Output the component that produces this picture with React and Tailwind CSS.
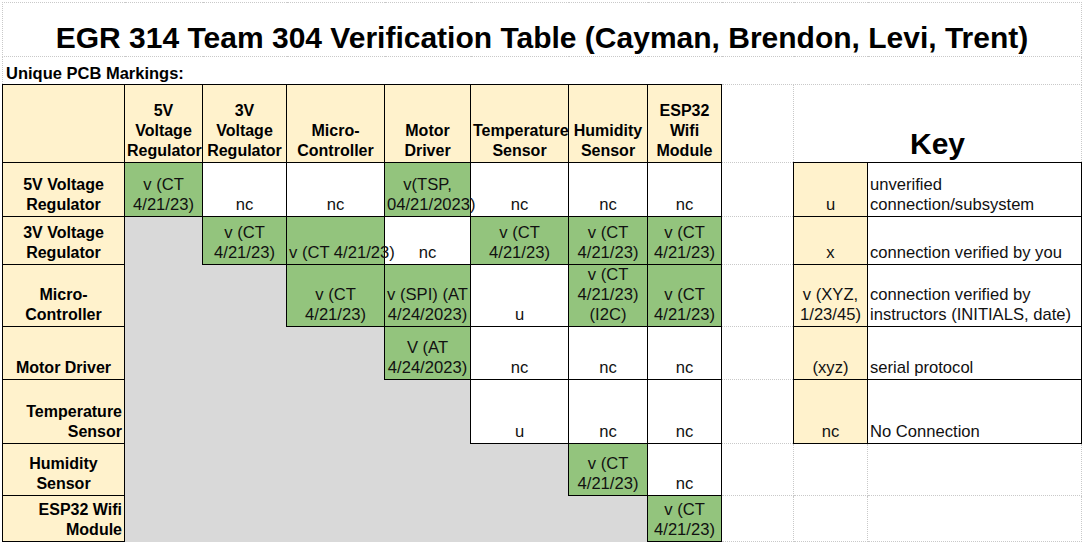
import React from 'react';

const GREEN = 'bg-[#93c47d]';
const YELLOW = 'bg-[#fff2cc]';
const GRAY = 'bg-[#d9d9d9]';

const colWidths = [122, 78, 84, 98, 86, 98, 79, 74, 72, 74, 214];

const headers = [
  ['5V', 'Voltage', 'Regulator'],
  ['3V', 'Voltage', 'Regulator'],
  ['Micro-', 'Controller'],
  ['Motor', 'Driver'],
  ['Temperature', 'Sensor'],
  ['Humidity', 'Sensor'],
  ['ESP32', 'Wifi', 'Module'],
];

const vct = { t: ['v (CT', '4/21/23)'], g: true };
const nc = { t: ['nc'] };
const u = { t: ['u'] };

const rows = [
  {
    label: ['5V Voltage', 'Regulator'], align: 'text-center', h: 'h-[54px]',
    cells: [vct, nc, nc, { t: ['v(TSP,', '04/21/2023)'], g: true }, nc, nc, nc],
    key: { k: ['u'], d: ['unverified', 'connection/subsystem'] },
  },
  {
    label: ['3V Voltage', 'Regulator'], align: 'text-center', h: 'h-[48px]',
    cells: [null, vct, { t: ['v (CT 4/21/23)'], g: true }, nc, vct, vct, vct],
    key: { k: ['x'], d: ['connection verified by you'] },
  },
  {
    label: ['Micro-', 'Controller'], align: 'text-center', h: 'h-[62px]',
    cells: [null, null, vct, { t: ['v (SPI) (AT', '4/24/2023)'], g: true }, u, { t: ['v (CT', '4/21/23)', '(I2C)'], g: true }, vct],
    key: { k: ['v (XYZ,', '1/23/45)'], d: ['connection verified by', 'instructors (INITIALS, date)'] },
  },
  {
    label: ['Motor Driver'], align: 'text-center', h: 'h-[53px]',
    cells: [null, null, null, { t: ['V (AT', '4/24/2023)'], g: true }, nc, nc, nc],
    key: { k: ['(xyz)'], d: ['serial protocol'] },
  },
  {
    label: ['Temperature', 'Sensor'], align: 'text-right', h: 'h-[64px]',
    cells: [null, null, null, null, u, nc, nc],
    key: { k: ['nc'], d: ['No Connection'] },
  },
  {
    label: ['Humidity', 'Sensor'], align: 'text-center', h: 'h-[52px]',
    cells: [null, null, null, null, null, vct, nc],
  },
  {
    label: ['ESP32 Wifi', 'Module'], align: 'text-right', h: 'h-[46px]',
    cells: [null, null, null, null, null, null, vct],
  },
];

function Lines({ lines }) {
  return lines.map((l, i) => (
    <div key={i} className="whitespace-nowrap">{l}</div>
  ));
}

const cellBase = 'align-bottom px-[2px] pb-px leading-[20px] overflow-visible';
const bodyText = 'text-[16.6px] text-[#111]';
const solid = 'border border-solid border-black';
const dotted = 'border border-dotted border-[#c9c9c9]';

export default function App() {
  return (
    <div className="min-h-[545px] w-[1084px] bg-white pl-[2px] pt-[2px] text-[16px] text-black" style={{ fontFamily: '"Liberation Sans", Arial, sans-serif' }}>
      <table className="table-fixed border-collapse w-[1079px]">
        <colgroup>
          {colWidths.map((w, i) => (
            <col key={i} style={{ width: w }} />
          ))}
        </colgroup>
        <tbody>
          <tr className="h-[54px]">
            <td colSpan={11} className={`${dotted} align-bottom pb-px text-center text-[30px] font-bold leading-[34px]`}>
              EGR 314 Team 304 Verification Table (Cayman, Brendon, Levi, Trent)
            </td>
          </tr>
          <tr className="h-[28px]">
            <td colSpan={11} className={`${dotted} ${cellBase} pl-[3px] text-[16.5px] font-bold`}>Unique PCB Markings:</td>
          </tr>
          <tr className="h-[78px]">
            <td className={`${solid} ${YELLOW}`}></td>
            {headers.map((h, i) => (
              <td key={i} className={`${solid} ${YELLOW} ${cellBase} text-center font-bold`}>
                <Lines lines={h} />
              </td>
            ))}
            <td className={dotted}></td>
            <td colSpan={2} className={`${dotted} align-bottom pb-px text-center text-[30px] font-bold leading-[34px]`}>Key</td>
          </tr>
          {rows.map((r, ri) => (
            <tr key={ri} className={r.h}>
              <td className={`${solid} ${YELLOW} ${cellBase} ${r.align} font-bold`}>
                <Lines lines={r.label} />
              </td>
              {r.cells.map((c, ci) =>
                c ? (
                  <td key={ci} className={`${solid} ${c.g ? GREEN : 'bg-white'} ${cellBase} ${bodyText} text-center`}>
                    <Lines lines={c.t} />
                  </td>
                ) : (
                  <td key={ci} className={`border-0 ${GRAY}`}></td>
                )
              )}
              <td className={dotted}></td>
              {r.key ? (
                <>
                  <td className={`${solid} ${YELLOW} ${cellBase} ${bodyText} text-center`}>
                    <Lines lines={r.key.k} />
                  </td>
                  <td className={`${solid} bg-white ${cellBase} ${bodyText} text-left`}>
                    <Lines lines={r.key.d} />
                  </td>
                </>
              ) : (
                <>
                  <td className={dotted}></td>
                  <td className={dotted}></td>
                </>
              )}
            </tr>
          ))}
        </tbody>
      </table>
    </div>
  );
}
